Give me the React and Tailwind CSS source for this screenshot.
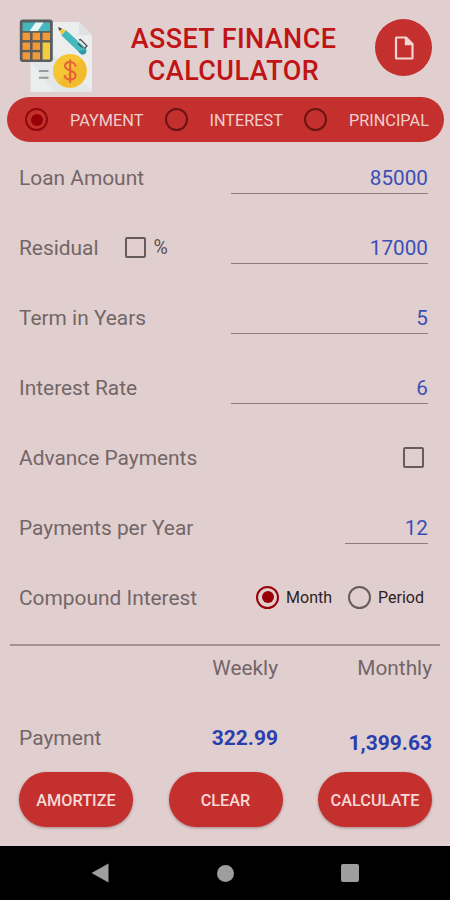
import React, { useState } from 'react';

function Logo() {
    return (
        <svg className="shrink-0" width="76" height="76" viewBox="0 0 76 76">
            <path d="M12.500 5H61L74 18V75H12.500Z" fill="#eceeee" />
            <path d="M33 36L74 73V75H36L12.500 45Z" fill="#e2e3e4" opacity="0.7" />
            <path d="M61 5L74 18H61Z" fill="#dfe2e4" />
            <g transform="translate(0.6 0.3)">
                <rect x="1.2" y="2.2" width="33" height="42.6" rx="3" fill="#5b5d5f" />
                <rect x="4" y="5.2" width="27.4" height="8.6" fill="#46b8bd" />
                <path d="M17 5.200H25L19 13.800H11Z" fill="#e9f6f6" />
                <g fill="#f29a35">
                    <rect x="4" y="15.4" width="7.4" height="7.4" />
                    <rect x="14" y="15.4" width="7.4" height="7.4" />
                    <rect x="24" y="15.4" width="7.4" height="7.4" />
                    <rect x="4" y="25.2" width="7.4" height="7.4" />
                    <rect x="14" y="25.2" width="7.4" height="7.4" />
                    <rect x="4" y="35" width="7.4" height="7.2" />
                    <rect x="14" y="35" width="7.4" height="7.2" />
                </g>
                <rect x="24" y="25.2" width="7.4" height="17" fill="#f6cb3c" />
            </g>
            <path d="M40.500 10.500L48.200 13.200L43.500 18.500Z" fill="#f4c842" />
            <path d="M40 10L44 11.400L41.500 14Z" fill="#3f4a50" />
            <path d="M48.200 13.200L68 31.500Q69.500 37.500 63.500 37.500L43.500 18.500Z" fill="#43b9bd" />
            <path d="M60 34.200L68.300 32.500Q69 38 63.500 37.500Z" fill="#30989e" />
            <path d="M61 22.800L62.500 22.500L69 29L66.500 31.500M60 26.500L64.500 30.500" fill="none" stroke="#4a4b55" strokeWidth="1.3" />
            <path d="M21 54H30.500M21 60.800H30.500" stroke="#95999b" strokeWidth="2" />
            <circle cx="52" cy="54" r="17" fill="#f6c534" />
            <path d="M40 66A17 17 0 0 0 64 42Z" fill="#f0b52c" opacity="0.65" />
            <path d="M57.500 49.500C57 43.500 47 43.500 47 49C47 54.500 57.500 52.500 57.500 58.500C57.500 64 46.500 64 46.500 58M52.200 42.500V66" fill="none" stroke="#e5623a" strokeWidth="2.1" />
        </svg>
    );
}

function Radio({ checked, ring, onClick }) {
    return (
        <button onClick={onClick} className={`flex size-[23px] shrink-0 items-center justify-center rounded-full border-2 ${ring}`}>
            {checked && <span className="size-[12px] rounded-full bg-[#980007]" />}
        </button>
    );
}

function Checkbox() {
    return <button className="size-[21px] shrink-0 rounded-[2px] border-2 border-[#675b5c]" />;
}

function Row({ label, extra, children }) {
    return (
        <div className="flex h-[70px] items-center">
            <span className="whitespace-nowrap pt-[3px] text-[20.9px]">{label}</span>
            {extra}
            <div className="ml-auto flex">{children}</div>
        </div>
    );
}

function Field({ value, width = 'w-[197px]' }) {
    return (
        <input
            defaultValue={value}
            className={`mr-[4px] h-[33px] border-b border-[#8f7d7e] bg-transparent pt-[2px] text-right text-[20.7px] text-[#3a4fb5] outline-none ${width}`}
        />
    );
}

const modes = ['PAYMENT', 'INTEREST', 'PRINCIPAL'];

function App() {
    const [mode, setMode] = useState('PAYMENT');
    const [compound, setCompound] = useState('Month');

    return (
        <div className="flex h-[900px] w-[450px] flex-col overflow-hidden bg-[#e1cfcf] font-['Roboto',sans-serif] text-[21px] text-[#736667]">
            <header className="flex h-[97px] shrink-0 items-start justify-between pl-[18px] pr-[18px] pt-[17px]">
                <Logo />
                <h1 className="mr-[2px] mt-[6px] text-center text-[27px] font-medium leading-[32px] tracking-[0.4px] text-[#c01416]">
                    ASSET FINANCE<br />CALCULATOR
                </h1>
                <button className="mt-[2px] flex size-[57px] items-center justify-center rounded-full bg-[#c4302d]">
                    <svg width="20" height="24" viewBox="0 0 20 24" fill="none" stroke="#f3d5d3" strokeWidth="2.2">
                        <path d="M2 2Q2 1.500 2.500 1.500H12L18.500 8V22Q18.500 22.500 18 22.500H2.500Q2 22.500 2 22Z" strokeLinejoin="round" />
                        <path d="M11.500 1.500V8.500H18L11.500 2Z" fill="#f3d5d3" strokeWidth="1.4" />
                    </svg>
                </button>
            </header>

            <div className="ml-[7px] flex h-[45px] w-[437px] shrink-0 items-center rounded-full bg-[#c4302d] pl-[18px] text-[16.3px] text-[#f1cfcd]">
                {modes.map((item) => (
                    <div key={item} className="flex w-[139.5px] shrink-0 items-center gap-[22px] last:w-auto">
                        <Radio checked={mode === item} ring={mode === item ? 'border-[#8f0a0c]' : 'border-[#6c1414]'} onClick={() => setMode(item)} />
                        <span className="pt-[3px]">{item}</span>
                    </div>
                ))}
            </div>

            <main className="shrink-0 pl-[19px] pr-[18px]">
                <Row label="Loan Amount"><Field value="85000" /></Row>
                <Row
                    label="Residual"
                    extra={
                        <div className="ml-[26px] flex items-center gap-[8px]">
                            <Checkbox />
                            <span className="pt-[2px] text-[19.5px] text-[#5d5152]">%</span>
                        </div>
                    }
                >
                    <Field value="17000" />
                </Row>
                <Row label="Term in Years"><Field value="5" /></Row>
                <Row label="Interest Rate"><Field value="6" /></Row>
                <Row label="Advance Payments">
                    <span className="mr-[8px] flex"><Checkbox /></span>
                </Row>
                <Row label="Payments per Year"><Field value="12" width="w-[83px]" /></Row>
                <Row label="Compound Interest">
                    <div className="mr-[8px] flex items-center text-[16px] text-[#2c2223]">
                        {['Month', 'Period'].map((item) => (
                            <div key={item} className="ml-[16px] flex items-center gap-[7px]">
                                <Radio checked={compound === item} ring={compound === item ? 'border-[#980007]' : 'border-[#675b5c]'} onClick={() => setCompound(item)} />
                                <span className="pt-[2px]">{item}</span>
                            </div>
                        ))}
                    </div>
                </Row>
            </main>

            <section className="mx-[10px] mt-[12px] h-[128px] shrink-0 border-t-2 border-[#a59192] pl-[9px] pr-[8px]">
                <div className="flex h-[46px] items-center text-[20.8px]">
                    <span className="w-[259px] text-right">Weekly</span>
                    <span className="flex-1 text-right">Monthly</span>
                </div>
                <div className="flex h-[94px] items-center">
                    <span className="w-[120px]">Payment</span>
                    <span className="w-[139px] text-right font-bold text-[#2a3fae]">322.99</span>
                    <span className="mt-[9px] flex-1 text-right font-bold text-[#2a3fae]">1,399.63</span>
                </div>
            </section>

            <div className="flex h-[74px] shrink-0 items-start justify-between pl-[19px] pr-[18px] text-[16.3px] font-medium text-[#f6d9d7]">
                {['AMORTIZE', 'CLEAR', 'CALCULATE'].map((label) => (
                    <button key={label} className="h-[55px] w-[114px] rounded-full bg-[#c4302d] pt-[3px] shadow-[0_1px_3px_rgba(70,30,30,0.4)]">
                        {label}
                    </button>
                ))}
            </div>

            <nav className="flex flex-1 items-center justify-between bg-black pl-[91px] pr-[91px]">
                <svg width="18" height="20" viewBox="0 0 18 20"><path d="M0.500 10L17.500 0.500V19.500Z" fill="#9e9e9e" /></svg>
                <span className="size-[17px] rounded-full bg-[#9e9e9e]" />
                <span className="size-[18px] rounded-[2px] bg-[#9e9e9e]" />
            </nav>
        </div>
    );
}

export default App;
